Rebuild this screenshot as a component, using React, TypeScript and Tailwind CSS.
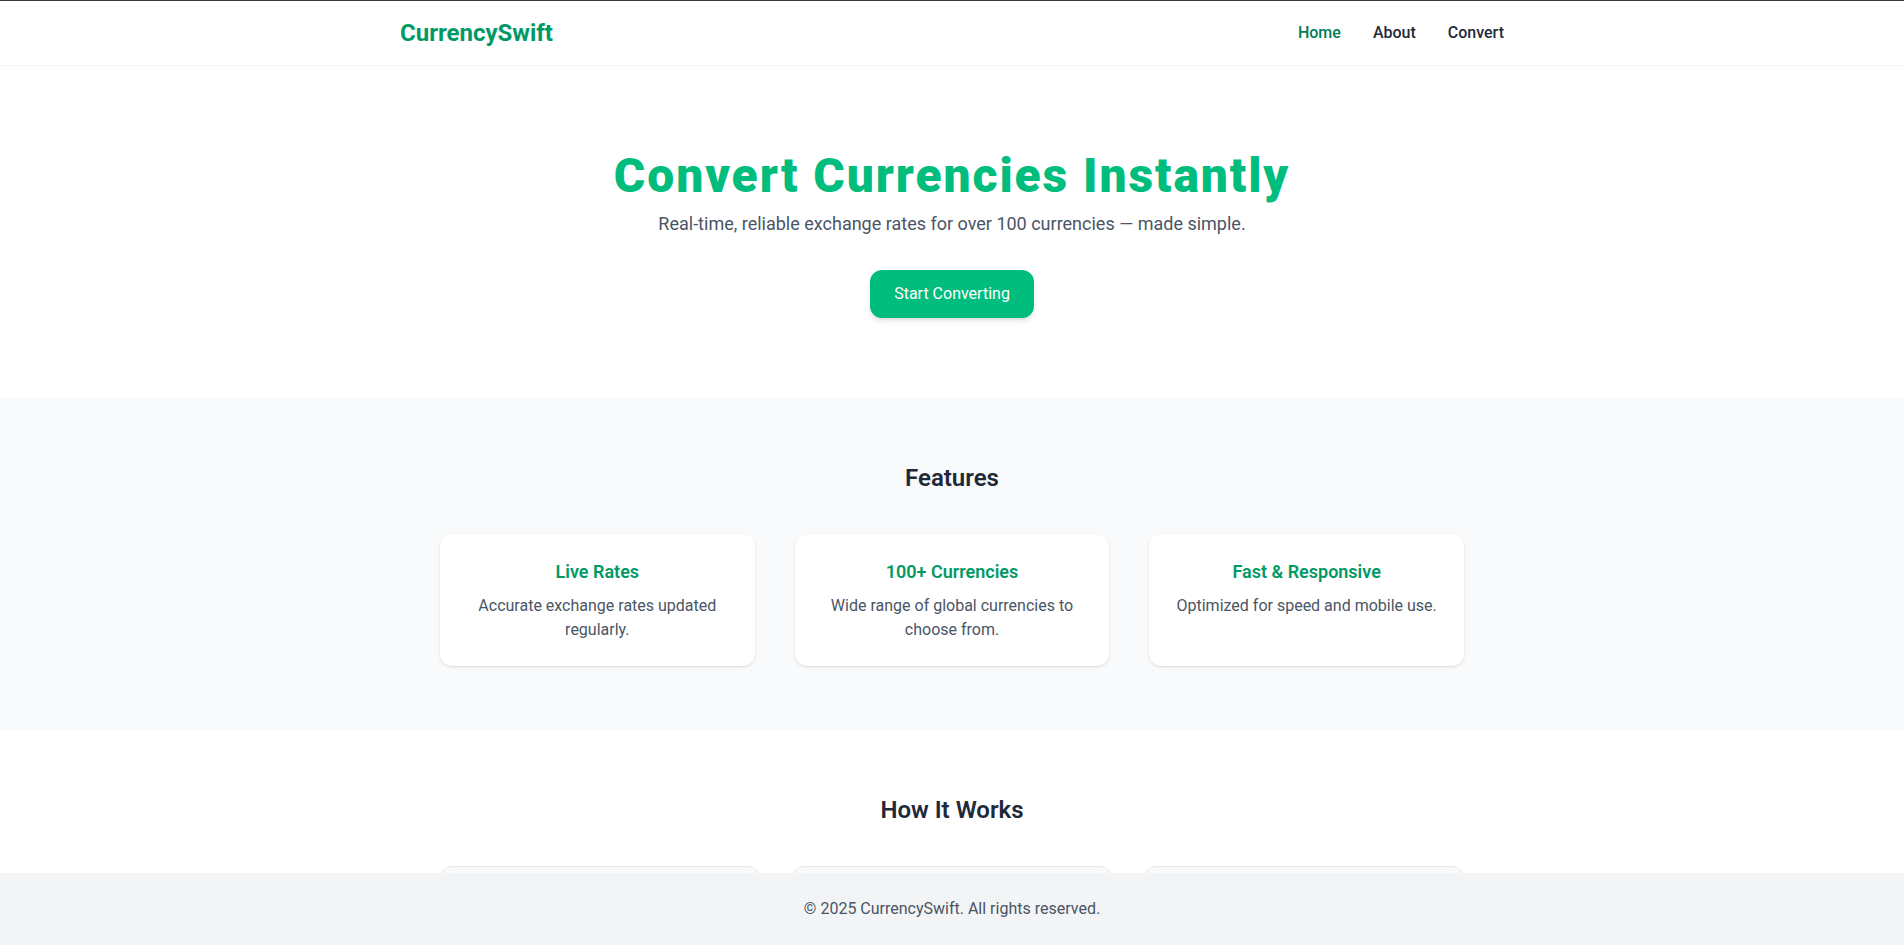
import React from "react";

const features = [
  { title: "Live Rates", text: "Accurate exchange rates updated regularly." },
  { title: "100+ Currencies", text: "Wide range of global currencies to choose from." },
  { title: "Fast & Responsive", text: "Optimized for speed and mobile use." },
];

const steps = [
  { title: "1. Choose Currencies", text: "Pick the currency you have and the one you need." },
  { title: "2. Enter Amount", text: "Type in how much you want to convert." },
  { title: "3. Get Results", text: "See the converted amount instantly." },
];

export default function App() {
  return (
    <div className="min-h-screen bg-white font-['Roboto',_'Liberation_Sans',_sans-serif] text-gray-800">
      {/* Header */}
      <header className="border-t border-b border-t-[#3c3c3c] border-b-gray-100 bg-white">
        <nav className="mx-auto flex max-w-6xl items-center justify-between px-6 py-4">
          <a href="#" className="text-2xl font-bold text-emerald-600">
            CurrencySwift
          </a>
          <div className="flex items-center gap-8 text-base font-medium">
            <a href="#" className="text-emerald-700">
              Home
            </a>
            <a href="#" className="text-gray-800">
              About
            </a>
            <a href="#" className="text-gray-800">
              Convert
            </a>
          </div>
        </nav>
      </header>

      {/* Hero */}
      <section className="px-6 py-20 text-center">
        <h1 className="mb-1 text-5xl leading-tight font-black tracking-[0.04em] text-emerald-500">
          Convert Currencies Instantly
        </h1>
        <p className="text-lg text-gray-600">
          Real-time, reliable exchange rates for over 100 currencies — made simple.
        </p>
        <button
          type="button"
          className="mt-8 rounded-xl bg-emerald-500 px-6 py-3 text-base text-white shadow-md"
        >
          Start Converting
        </button>
      </section>

      {/* Features */}
      <section className="bg-gray-50 px-6 py-16">
        <h2 className="mb-10 text-center text-2xl font-semibold text-gray-800">Features</h2>
        <div className="mx-auto grid max-w-5xl grid-cols-3 gap-10">
          {features.map((f) => (
            <div key={f.title} className="rounded-xl bg-white p-6 text-center shadow-sm">
              <h3 className="mb-2 text-lg font-semibold text-emerald-600">{f.title}</h3>
              <p className="text-base text-gray-600">{f.text}</p>
            </div>
          ))}
        </div>
      </section>

      {/* How it works */}
      <section className="px-6 pt-16 pb-32">
        <h2 className="mb-10 text-center text-2xl font-semibold text-gray-800">How It Works</h2>
        <div className="mx-auto grid max-w-5xl grid-cols-3 gap-8">
          {steps.map((s) => (
            <div
              key={s.title}
              className="rounded-xl border border-gray-200 bg-gray-50 p-6 text-center"
            >
              <h3 className="mb-2 text-lg font-semibold text-gray-800">{s.title}</h3>
              <p className="text-base text-gray-600">{s.text}</p>
            </div>
          ))}
        </div>
      </section>

      {/* Footer */}
      <footer className="fixed bottom-0 left-0 w-full bg-gray-100 py-6 text-center text-base text-gray-600">
        © 2025 CurrencySwift. All rights reserved.
      </footer>
    </div>
  );
}
